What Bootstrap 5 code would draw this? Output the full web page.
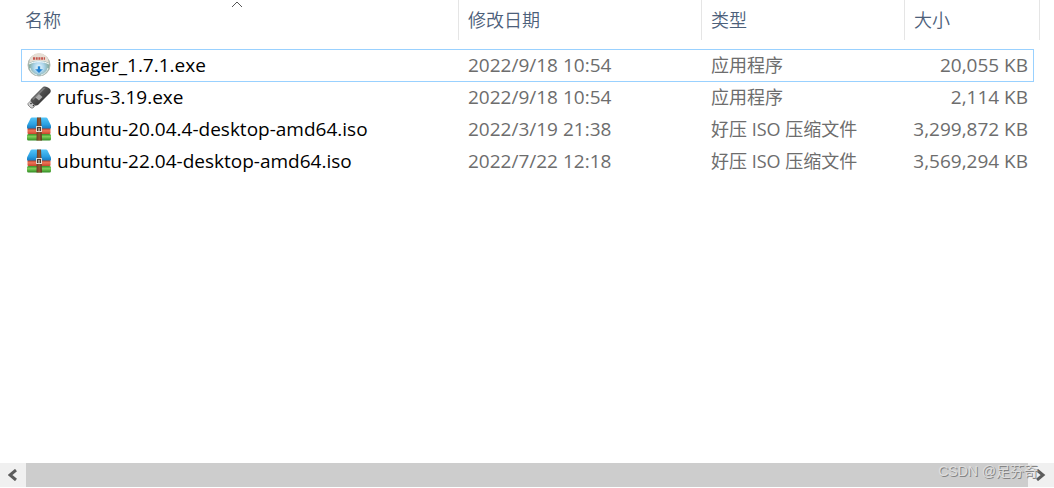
<!DOCTYPE html>
<html lang="zh-CN">
<head>
<meta charset="utf-8">
<meta name="viewport" content="width=device-width, initial-scale=1">
<title>文件列表</title>
<link href="https://cdn.jsdelivr.net/npm/bootstrap@5.3.0/dist/css/bootstrap.min.css" rel="stylesheet">
<style>
  body { font: 18px/24px "Open Sans", "Noto Sans CJK SC", sans-serif; color: #000; background: #fff; }
  .explorer { min-height: 100vh; padding-bottom: 1px; }
  .file-pane { padding: 0 14px 0 16px; }
  .files { table-layout: fixed; width: 100%; border-collapse: separate; border-spacing: 0; white-space: nowrap; }
  .c-lead { width: 5px; } .c-date { width: 243px; } .c-type { width: 203px; } .c-size { width: 129px; } .c-end { width: 6px; }
  .files th { height: 40px; padding: 0; border-right: 1px solid #e5e5e5; font-weight: 350; }
  .sort { display: block; width: 100%; height: 40px; padding: 0 9px; border: 0; background: none; color: #4c607a; text-align: left; font-weight: 350; }
  .sort-mark { top: 1px; left: 50%; transform: translateX(-50%); }
  .files td { height: 32px; padding: 0 0 2px; color: #6d6d6d; font-size: 19px; }
  .files td.gap-row { height: 9px; }
  .files .name-cell { padding-left: 6px; color: #000; }
  .files .date-cell, .files .type-cell { padding-left: 9px; }
  .files .size-cell { padding-right: 6px; text-align: right; }
  .zh { font-size: 18px; }
  .files .focused .name-cell, .files .focused .date-cell, .files .focused .type-cell, .files .focused .size-cell { height: 33px; border: solid #99d1ff; border-width: 1px 0; }
  .files .focused .name-cell { border-left-width: 1px; padding-left: 5px; }
  .files .focused .size-cell { border-right-width: 1px; padding-right: 5px; }
  .file-label { gap: 6px; }
  .file-label svg { width: 24px; height: 24px; flex: none; }
  .scroll-track { height: 24px; background: #f0f0f0; }
  .scroll-step { width: 26px; padding: 0; border: 0; background: none; }
  .thumb { background: #cdcdcd; }
  .watermark { right: 16px; bottom: 7px; font: 14px/20px "Liberation Sans", "Noto Sans CJK SC", sans-serif; color: #dedede; text-shadow: 1px 1px 0 #858585; pointer-events: none; }
</style>
<script src="https://cdn.jsdelivr.net/npm/bootstrap@5.3.0/dist/js/bootstrap.bundle.min.js"></script>
</head>
<body>
<svg class="position-absolute" width="0" height="0" aria-hidden="true">
  <defs>
    <linearGradient id="blueTop" x1="0" y1="0" x2="0" y2="1"><stop offset="0" stop-color="#52c4f7"/><stop offset=".6" stop-color="#2ba0e2"/><stop offset="1" stop-color="#1676bb"/></linearGradient>
    <linearGradient id="redBook" x1="0" y1="0" x2="0" y2="1"><stop offset="0" stop-color="#b5402a"/><stop offset=".4" stop-color="#ee7558"/><stop offset="1" stop-color="#c8452c"/></linearGradient>
    <linearGradient id="greenBook" x1="0" y1="0" x2="0" y2="1"><stop offset="0" stop-color="#3a8c28"/><stop offset=".4" stop-color="#7fd05a"/><stop offset="1" stop-color="#2f8a22"/></linearGradient>
    <linearGradient id="strap" x1="0" y1="0" x2="1" y2="0"><stop offset="0" stop-color="#6a3a22"/><stop offset=".5" stop-color="#96592f"/><stop offset="1" stop-color="#5c321e"/></linearGradient>
    <radialGradient id="disc" cx=".5" cy=".6" r=".6"><stop offset="0" stop-color="#eef9ff"/><stop offset=".4" stop-color="#a9d3ea"/><stop offset=".75" stop-color="#86ab9f"/><stop offset="1" stop-color="#8d9a8a"/></radialGradient>
    <linearGradient id="stick" x1="0" y1="0" x2="1" y2="1"><stop offset="0" stop-color="#777"/><stop offset=".5" stop-color="#4a4a4a"/><stop offset="1" stop-color="#252525"/></linearGradient>
  </defs>
  <symbol id="archive" viewBox="0 0 24 24">
    <path d="M5 .500h14q1 0 1.500 1L24 8.500v2q0 1.500-1.500 1.500h-21Q0 12 0 10.500v-2l3.500-7q.5-1 1.500-1z" fill="url(#blueTop)"/>
    <rect x=".5" y="11.500" width="23" height="5.500" rx="1" fill="url(#redBook)"/>
    <rect x="0" y="17" width="24" height="6.500" rx="1.500" fill="url(#greenBook)"/>
    <path d="M10 .500h4l1 23H9.500z" fill="url(#strap)"/>
    <rect x="9.500" y="9.500" width="5" height="5" fill="#4b3a30" stroke="#e2dcd3"/>
    <path d="M12 11v3" stroke="#eee5d5"/>
  </symbol>
</svg>

<div class="explorer d-flex flex-column position-relative">
  <main class="file-pane flex-grow-1">
    <table class="files">
      <colgroup><col class="c-lead"><col><col class="c-date"><col class="c-type"><col class="c-size"><col class="c-end"></colgroup>
      <thead>
        <tr>
          <th colspan="2" scope="col" aria-sort="ascending" class="position-relative">
            <svg class="sort-mark position-absolute" width="12" height="7" viewBox="0 0 12 7" fill="none" stroke="#555" aria-hidden="true"><path d="M1 6l5-5 5 5"/></svg>
            <button type="button" class="sort">名称</button>
          </th>
          <th scope="col"><button type="button" class="sort">修改日期</button></th>
          <th scope="col"><button type="button" class="sort">类型</button></th>
          <th scope="col" colspan="2"><button type="button" class="sort">大小</button></th>
        </tr>
      </thead>
      <tbody>
        <tr aria-hidden="true"><td class="gap-row" colspan="6"></td></tr>
        <tr class="focused">
          <td></td>
          <td class="name-cell"><div class="file-label d-flex align-items-center"><svg viewBox="0 0 24 24" aria-hidden="true"><circle cx="12" cy="12" r="11" fill="url(#disc)" stroke="#b4bbb5"/><path d="M2 10a10 10 0 0 1 20 0c-5-3-15-3-20 0z" fill="#e6ded4"/><path d="M6 5.500h12" stroke="#c4564e" stroke-width="2.500" stroke-dasharray="2 .7"/><path d="M2 11c5-3 15-3 20 0" stroke="#fff" fill="none"/><path d="M10.500 13h3v3h3L12 20.500 7.500 16h3z" fill="#2482d2" stroke="#d8f3ff" stroke-width=".6"/><path d="M3 15c1 4 4 6 7 7M21 15c-1 4-4 6-7 7" stroke="#e4eeee" fill="none"/></svg><span class="file-name">imager_1.7.1.exe</span></div></td>
          <td class="date-cell">2022/9/18 10:54</td><td class="type-cell"><span class="zh">应用程序</span></td><td class="size-cell">20,055 KB</td><td></td>
        </tr>
        <tr>
          <td></td>
          <td class="name-cell"><div class="file-label d-flex align-items-center"><svg viewBox="0 0 24 24" aria-hidden="true"><path d="M1 18.500l4-4 5 4-4 4.500-2 0-3-3z" fill="#d0d0d0" stroke="#777" stroke-width=".8"/><path d="M3 18.500l1-1 1 1-1 1zM5.500 20.500l1-1 1 1-1 1z" fill="#333"/><path d="M4 14L16 2c2-1 5 0 7 2 1 1 1 3 0 4L11 20c-2 1-4 0-6-2-1-1-2-3-1-4z" fill="url(#stick)"/><path d="M5 14L16.500 2.500l2 .5L6.500 15z" fill="#7c7c7c"/><path d="M8.500 12.500l3.500-3.500 3.500 3-3.500 3.500z" fill="#aaa"/></svg><span class="file-name">rufus-3.19.exe</span></div></td>
          <td class="date-cell">2022/9/18 10:54</td><td class="type-cell"><span class="zh">应用程序</span></td><td class="size-cell">2,114 KB</td><td></td>
        </tr>
        <tr>
          <td></td>
          <td class="name-cell"><div class="file-label d-flex align-items-center"><svg aria-hidden="true"><use href="#archive"/></svg><span class="file-name">ubuntu-20.04.4-desktop-amd64.iso</span></div></td>
          <td class="date-cell">2022/3/19 21:38</td><td class="type-cell"><span class="zh">好压 ISO 压缩文件</span></td><td class="size-cell">3,299,872 KB</td><td></td>
        </tr>
        <tr>
          <td></td>
          <td class="name-cell"><div class="file-label d-flex align-items-center"><svg aria-hidden="true"><use href="#archive"/></svg><span class="file-name">ubuntu-22.04-desktop-amd64.iso</span></div></td>
          <td class="date-cell">2022/7/22 12:18</td><td class="type-cell"><span class="zh">好压 ISO 压缩文件</span></td><td class="size-cell">3,569,294 KB</td><td></td>
        </tr>
      </tbody>
    </table>
  </main>
  <div class="scroll-track d-flex">
    <button type="button" class="scroll-step d-flex align-items-center justify-content-center" aria-label="向左滚动"><svg width="10" height="12" viewBox="0 0 10 12" fill="none" stroke="#5c5c5c" stroke-width="3"><path d="M8 1L2 6l6 5"/></svg></button>
    <div class="thumb flex-grow-1"></div>
    <button type="button" class="scroll-step d-flex align-items-center justify-content-center" aria-label="向右滚动"><svg width="10" height="12" viewBox="0 0 10 12" fill="none" stroke="#5c5c5c" stroke-width="3"><path d="M1 1l6 5-6 5"/></svg></button>
  </div>
  <div class="watermark position-absolute">CSDN @足芬奇</div>
</div>
</body>
</html>
